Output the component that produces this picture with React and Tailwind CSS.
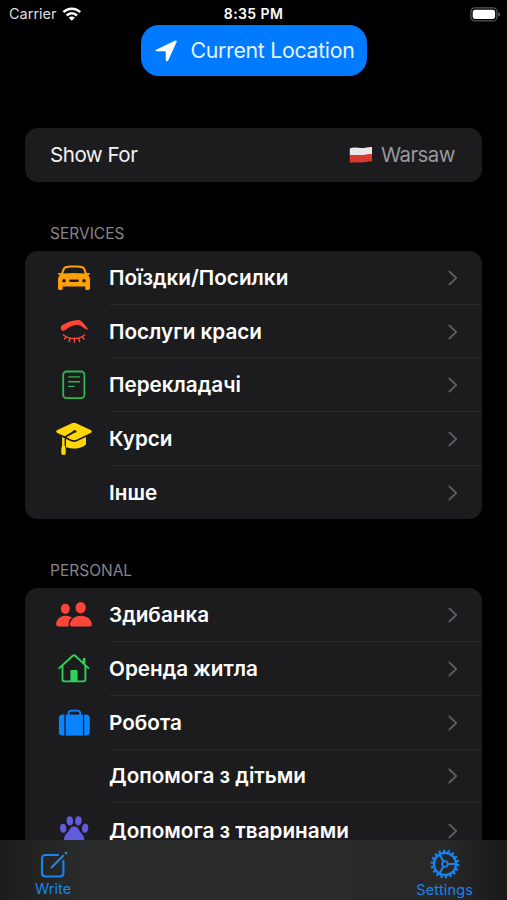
import React from 'react';

const CarIcon = () => (
  <svg viewBox="0 0 48 54" className="w-12 h-[54px] text-[#ff9f0a]" fill="currentColor">
    <path
      fillRule="evenodd"
      d="M16.6 14.9C21 14.4 27 14.4 31.4 14.9C33.3 15.1 34.5 16 35.2 17.8L37.2 23.2C39 24.5 40 26.4 40 29V37.3C40 38.4 39.4 39 38.4 39H36.8C35.8 39 35.2 38.4 35.2 37.3V35.4H12.8V37.3C12.8 38.4 12.2 39 11.2 39H9.6C8.6 39 8 38.4 8 37.3V29C8 26.4 9 24.5 10.8 23.2L12.8 17.8C13.5 16 14.7 15.1 16.6 14.9ZM17 16.9C15.8 17 15.1 17.5 14.7 18.6L13.2 22.6C20 21.9 28 21.9 34.8 22.6L33.3 18.6C32.9 17.5 32.2 17 31 16.9C26.5 16.5 21.5 16.5 17 16.9ZM14 27.9A1.8 1.8 0 1 0 14 31.5A1.8 1.8 0 1 0 14 27.9ZM34 27.9A1.8 1.8 0 1 0 34 31.5A1.8 1.8 0 1 0 34 27.9ZM20.4 28.4A1.3 1.3 0 0 0 20.4 31H27.6A1.3 1.3 0 0 0 27.6 28.4Z"
    />
    <rect x="8" y="22" width="4" height="1.8" rx="0.8" />
    <rect x="36" y="22" width="4" height="1.8" rx="0.8" />
  </svg>
);

const BrowIcon = () => (
  <svg viewBox="0 0 48 54" className="w-12 h-[54px] text-[#ff453a]" fill="none" stroke="currentColor" strokeLinecap="round">
    <path
      fill="currentColor"
      stroke="none"
      d="M11.2 24.4C10.3 22.6 10.8 20.9 12.6 19.9C17.5 17.2 22.5 15.3 28.1 15C29.7 14.9 30.8 15.4 31.8 16.6L37.6 23.3C38.3 24.2 37.6 25 36.6 24.6C33.6 23.3 31.5 20.6 28.4 19.9C24 19.5 19.5 22.2 14.9 25.2C13.4 26.1 12 25.9 11.2 24.4Z"
    />
    <path strokeWidth="1.5" d="M13.4 30C19 34.7 29.1 34.7 34.6 30" />
    <path strokeWidth="1.5" d="M15.8 31.8L14.6 34M20 33.2L19.2 36.6M24.4 33.6V37.2M28.6 33.1L29.6 36.6M32.4 31.8L33.8 34" />
  </svg>
);

const DocIcon = () => (
  <svg viewBox="0 0 48 54" className="w-12 h-[54px] text-[#30b850]" fill="none" stroke="currentColor" strokeLinecap="round">
    <rect x="13.2" y="13.5" width="21.2" height="26.6" rx="3.4" strokeWidth="1.8" />
    <path strokeWidth="1.4" d="M18.8 18.9H29.4M18.8 23.7H29.4M18.8 28.4H24" />
  </svg>
);

const CapIcon = () => (
  <svg viewBox="0 0 48 54" className="w-12 h-[54px] text-[#ffd60a]" fill="currentColor">
    <path d="M21.9 11.2C23.3 10.5 24.7 10.5 26.1 11.2L40.6 18C42.2 18.8 42.2 20.1 40.6 20.9L27 27.5C25 28.5 23 28.5 21 27.5L16.4 25.3L24.6 20.7C25.8 20.8 26.8 20.2 26.6 19.2C26.3 18 23 18 22.6 19.4L14.6 24.3L7.4 20.9C5.8 20.1 5.8 18.8 7.4 18Z" />
    <path d="M16 26.9L21 29.2C23 30.2 25 30.2 27 29.2L36 24.9V31.4C36 32.3 35.6 32.9 34.8 33.5C31 36.2 25.6 37.2 20.4 36.3L16 35.2Z" />
    <path d="M12.1 25L14.6 26.2V33.4C15.8 35.2 15.9 38.5 15.7 41.3C15.6 42.3 15.1 42.8 14.2 42.8H12.8C11.9 42.8 11.4 42.3 11.4 41.3C11.2 38.6 11.2 35.4 12.1 33.4Z" />
  </svg>
);

const PeopleIcon = () => (
  <svg viewBox="0 0 48 54" className="w-12 h-[54px] text-[#ff453a]" fill="currentColor">
    <ellipse cx="15.3" cy="20.8" rx="4.5" ry="5.1" />
    <ellipse cx="30.7" cy="19.7" rx="5.1" ry="5.8" />
    <path d="M18.9 38.6C17.8 35 19 31.8 22 29.3C20.2 28.3 17.9 27.7 15.3 27.7C10.2 27.7 6.2 31.7 6.2 36.1C6.2 37.8 7 38.6 8.6 38.6Z" />
    <path d="M30.9 27.7C36.8 27.7 41.8 31.8 41.8 36.3C41.8 37.9 41 38.6 39.3 38.6H22.5C20.8 38.6 20 37.9 20 36.3C20 31.8 25 27.7 30.9 27.7Z" />
  </svg>
);

const HouseIcon = () => (
  <svg viewBox="0 0 48 54" className="w-12 h-[54px] text-[#30d158]" fill="none" stroke="currentColor" strokeLinecap="round" strokeLinejoin="round">
    <path strokeWidth="1.9" d="M9.2 26.1L22.8 13.8C23.6 13.1 24.4 13.1 25.2 13.8L38.4 26.1" />
    <path strokeWidth="1.9" d="M12.5 24V37.2C12.5 38.7 13.3 39.4 14.7 39.4H33.2C34.6 39.4 35.4 38.7 35.4 37.2V24" />
    <path strokeWidth="2.6" strokeLinecap="butt" d="M34.1 16V21.8" />
    <path fill="currentColor" stroke="none" d="M20.4 29.3C20.4 28.5 20.8 28.1 21.6 28.1H26.4C27.2 28.1 27.6 28.5 27.6 29.3V39H20.4Z" />
  </svg>
);

const SuitcaseIcon = () => (
  <svg viewBox="0 0 48 54" className="w-12 h-[54px] text-[#0a84ff]" fill="currentColor">
    <path fill="none" stroke="currentColor" strokeWidth="1.8" d="M18.6 19.5V17.3C18.6 15.6 19.6 14.7 21.3 14.7H27.5C29.2 14.7 30.2 15.6 30.2 17.3V19.5" />
    <rect x="15.7" y="18.6" width="17.2" height="21" />
    <path d="M14.4 18.6V39.6H12.6C10.2 39.6 8.9 38.3 8.9 36V22.2C8.9 19.9 10.2 18.6 12.6 18.6Z" />
    <path d="M34.2 18.6V39.6H36C38.5 39.6 39.8 38.3 39.8 36V22.2C39.8 19.9 38.5 18.6 36 18.6Z" />
  </svg>
);

const PawIcon = () => (
  <svg viewBox="0 0 48 54" className="w-12 h-[54px] text-[#635bdf]" fill="currentColor">
    <ellipse cx="13.2" cy="25.3" rx="3.1" ry="4.5" transform="rotate(-8 13.2 25.3)" />
    <ellipse cx="19.8" cy="17.8" rx="3.2" ry="4.6" transform="rotate(-4 19.8 17.8)" />
    <ellipse cx="28.4" cy="17.8" rx="3.2" ry="4.6" transform="rotate(4 28.4 17.8)" />
    <ellipse cx="35.1" cy="25.3" rx="3.1" ry="4.5" transform="rotate(8 35.1 25.3)" />
    <path d="M24.1 23.6C27 23.6 28.4 25.6 29.6 28C31 30.6 34.2 32 34.2 36.6C34.2 39 32.4 40.5 30 40.5C28 40.5 26.5 39.6 24.1 39.6C21.7 39.6 20.2 40.5 18.2 40.5C15.8 40.5 14 39 14 36.6C14 32 17.3 30.6 18.7 28C19.9 25.6 21.2 23.6 24.1 23.6Z" />
  </svg>
);

const Chevron = () => (
  <svg viewBox="0 0 10 16" className="w-2.5 h-4 text-[#5b5b5f]" fill="none" stroke="currentColor" strokeWidth="1.9" strokeLinecap="round" strokeLinejoin="round">
    <path d="M1.4 1.5L8.2 8L1.4 14.5" />
  </svg>
);

const LocationIcon = () => (
  <svg viewBox="0 0 22 22" className="w-[22px] h-[22px]" fill="white">
    <path d="M1.1 9.8L20.3 0.6C21.4 0.1 22.1 0.8 21.6 1.9L13.2 20.6C12.6 21.9 10.8 21.6 10.8 20.1L10.7 11.9C10.7 11.5 10.5 11.3 10.1 11.3L1.6 11.2C0.1 11.2 -0.1 10.4 1.1 9.8Z" />
  </svg>
);

const WifiIcon = () => (
  <svg viewBox="0 0 20 14" className="w-5 h-3.5" fill="none" stroke="white" strokeWidth="2.5">
    <path d="M1.4 5.2C6.1 0.5 13.5 0.5 18.2 5.2" />
    <path d="M4.6 8.5C7.6 5.6 12 5.6 15 8.5" />
    <path fill="white" stroke="none" d="M9.8 13.8L6.7 10.7C8.5 9.2 11.1 9.2 12.9 10.7Z" />
  </svg>
);

const BatteryIcon = () => (
  <svg viewBox="0 0 31 15" className="w-[31px] h-[15px]">
    <rect x="0.9" y="0.9" width="26" height="13" rx="4" fill="none" stroke="#555" strokeWidth="1.3" />
    <rect x="2.7" y="2.7" width="22.4" height="9.4" rx="2.4" fill="white" />
    <path d="M28.3 5.2C30.6 5.8 30.6 9 28.3 9.6Z" fill="#6b6b6b" />
  </svg>
);

const FlagIcon = () => (
  <svg viewBox="0 0 24 18" className="w-6 h-[18px]">
    <path fill="#e9e9ea" d="M0.8 2.6C5 0.8 8.5 1.8 12 2C16 2.2 19.5 0.6 23 1V9C19 8 16 9.8 12 9.6C8 9.4 5 8.6 0.8 9.6Z" />
    <path fill="#d93a30" d="M0.8 9.4C5 8.4 8 9.2 12 9.2C16 9.2 19 7.6 23 8.2V15.2C19.5 14.8 16 16.4 12 16.4C8.5 16.4 5 15.6 0.8 16.8Z" />
  </svg>
);

const WriteIcon = () => (
  <svg viewBox="0 0 28 28" className="w-7 h-7" fill="none" stroke="#1a84ee" strokeLinecap="round">
    <path strokeWidth="2.1" d="M18 4H5.4C3.2 4 2 5.2 2 7.4V22.1C2 24.3 3.2 25.5 5.4 25.5H20C22.2 25.5 23.4 24.3 23.4 22.1V10" />
    <path strokeWidth="2.1" d="M11.6 16.5L23.2 4.8" />
    <path strokeWidth="2.6" d="M25.9 2.2L26.1 2" />
  </svg>
);

const SettingsIcon = () => (
  <svg viewBox="-15 -15 30 30" className="w-[30px] h-[30px]" fill="none" stroke="#1a84ee">
    <circle r="11.1" strokeWidth="2.3" />
    <circle r="13.2" strokeWidth="2.4" strokeDasharray="2.2 2.407" />
    <circle r="2.9" strokeWidth="1.8" />
    <path strokeWidth="2" d="M3.4 0H10.8M-1.7 -2.9L-5.4 -9.3M-1.7 2.9L-5.4 9.3" />
  </svg>
);

const services = [
  { label: 'Поїздки/Посилки', icon: CarIcon },
  { label: 'Послуги краси', icon: BrowIcon },
  { label: 'Перекладачі', icon: DocIcon },
  { label: 'Курси', icon: CapIcon },
  { label: 'Інше' },
];

const personal = [
  { label: 'Здибанка', icon: PeopleIcon },
  { label: 'Оренда житла', icon: HouseIcon },
  { label: 'Робота', icon: SuitcaseIcon },
  { label: 'Допомога з дітьми' },
  { label: 'Допомога з тваринами', icon: PawIcon },
];

const Section = ({ title, items }) => (
  <section>
    <h2 className="pl-[25px] text-[15.5px] leading-5 text-[#858589]">{title}</h2>
    <ul className="mt-[7px] rounded-[13px] bg-[#1c1c1e] overflow-hidden">
      {items.map(({ label, icon: Icon }, i) => (
        <li key={label} className="flex items-center h-[53.7px] pl-[25px]">
          <div className="w-12 shrink-0">{Icon && <Icon />}</div>
          <div
            className={`ml-[11px] flex-1 h-full flex items-center justify-between pt-px pr-6 ${
              i < items.length - 1 ? 'border-b border-[#29292b]' : ''
            }`}
          >
            <span className="text-[20.7px] leading-7 font-semibold text-white whitespace-nowrap">{label}</span>
            <Chevron />
          </div>
        </li>
      ))}
    </ul>
  </section>
);

const App = () => {
  return (
    <div className="w-[507px] h-[900px] bg-black overflow-hidden flex flex-col font-['Inter','Liberation_Sans',sans-serif]">
      {/* Status Bar */}
      <div className="h-[25px] shrink-0 grid grid-cols-3 items-center pt-[3px] pl-[9px] pr-1.5 text-white">
        <div className="flex items-center gap-[5px]">
          <span className="text-[14.5px] leading-5 text-[#dedede]">Carrier</span>
          <WifiIcon />
        </div>
        <span className="text-center text-[14px] leading-5 font-semibold tracking-[0.4px] -ml-[3px]">8:35 PM</span>
        <div className="flex justify-end">
          <BatteryIcon />
        </div>
      </div>

      {/* Content */}
      <main className="flex-1 min-h-0 overflow-hidden px-[25px]">
        <button className="mx-auto flex items-center w-[226px] h-[51px] rounded-[18px] bg-[#007aff] pl-[14px] gap-[14px]">
          <LocationIcon />
          <span className="text-[21.3px] tracking-[-0.3px] text-[#e4f2ff] whitespace-nowrap">Current Location</span>
        </button>

        <div className="mt-[52px] h-[54px] rounded-[13px] bg-[#1c1c1e] flex items-center justify-between pt-px pl-[25px] pr-[27px]">
          <span className="text-[20.6px] tracking-[-0.5px] text-[#f2f2f2]">Show For</span>
          <div className="flex items-center gap-2">
            <FlagIcon />
            <span className="text-[20.4px] tracking-[-0.5px] text-[#98989e]">Warsaw</span>
          </div>
        </div>

        <div className="mt-[42px] flex flex-col gap-[42px]">
          <Section title="SERVICES" items={services} />
          <Section title="PERSONAL" items={personal} />
        </div>
      </main>

      {/* Tab Bar */}
      <nav className="h-[60px] shrink-0 flex justify-between bg-[linear-gradient(to_right,#1b1b1b,#2b2d2d_17%,#2b2b2b_50%,#282828_88%,#191919)] pl-[35px] pr-[34px] text-[14.4px] leading-4 text-[#1a84ee]">
        <div className="flex flex-col items-center pt-[11px] gap-0.5">
          <div className="pl-0.5">
            <WriteIcon />
          </div>
          <span className="tracking-[0.1px]">Write</span>
        </div>
        <div className="flex flex-col items-center pt-[9px] gap-[3px]">
          <SettingsIcon />
          <span className="tracking-[0.2px]">Settings</span>
        </div>
      </nav>
    </div>
  );
};

export default App;
